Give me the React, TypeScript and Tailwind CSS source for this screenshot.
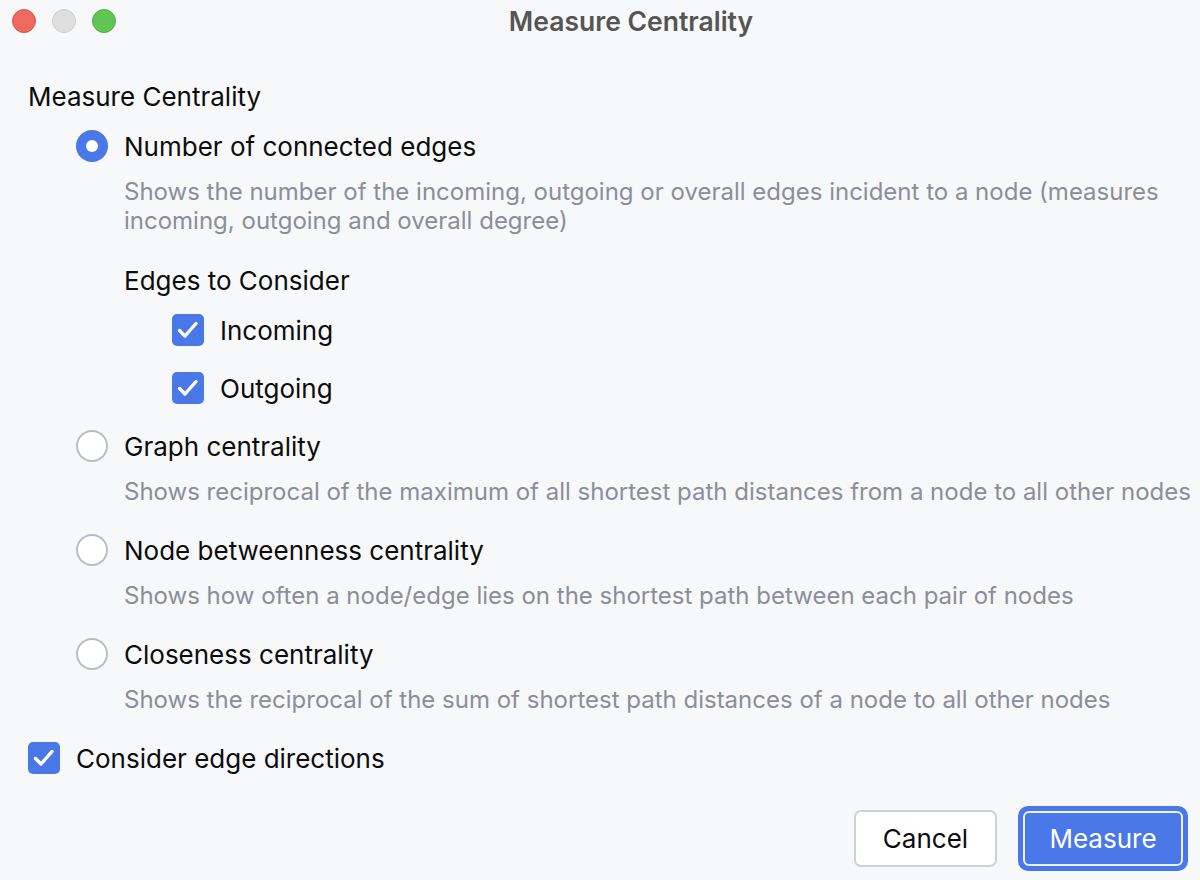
import React from 'react';

const font = { fontFamily: 'Inter, "Noto Sans", sans-serif' };

const Radio: React.FC<{ checked?: boolean }> = ({ checked }) =>
  checked ? (
    <div className="w-8 h-8 rounded-full bg-[#4a78e8] flex items-center justify-center shrink-0">
      <div className="w-3 h-3 rounded-full bg-white" />
    </div>
  ) : (
    <div className="w-8 h-8 rounded-full bg-white border-2 border-[#b9bcc6] shrink-0" />
  );

const Check: React.FC = () => (
  <div className="w-8 h-8 rounded-[5px] bg-[#4a78e8] flex items-center justify-center shrink-0">
    <svg width="32" height="32" viewBox="0 0 32 32" fill="none">
      <path d="M7.5 16.5 L13 22 L24 9.5" stroke="white" strokeWidth="3.4" strokeLinecap="round" strokeLinejoin="round" />
    </svg>
  </div>
);

const Option: React.FC<{ checked?: boolean; label: string; desc: string[]; mt: string }> = ({ checked, label, desc, mt }) => (
  <div className={mt}>
    <div className="flex items-center h-8 gap-4">
      <Radio checked={checked} />
      <span className="text-[26px] text-[#0c0c0c]">{label}</span>
    </div>
    <div className="pl-12 mt-[15px] text-[24px] leading-[29px] text-[#8b8e99] whitespace-nowrap">
      {desc.map((d) => (
        <div key={d}>{d}</div>
      ))}
    </div>
  </div>
);

export default function App() {
  return (
    <div className="w-[1200px] h-[880px] bg-[#f7f8fa] flex flex-col overflow-hidden" style={font}>
      <div className="h-[42px] shrink-0 relative flex items-center justify-center">
        <div className="absolute left-3 top-[9px] flex gap-4">
          <div className="w-6 h-6 rounded-full bg-[#ed6a5e] border border-[#d9574b]" />
          <div className="w-6 h-6 rounded-full bg-[#dfdfdf] border border-[#cdcdcd]" />
          <div className="w-6 h-6 rounded-full bg-[#61c554] border border-[#52ae45]" />
        </div>
        <span className="text-[26.5px] leading-[32px] font-semibold text-[#555555] pl-[62px]">Measure Centrality</span>
      </div>

      <div className="pl-7 pr-[12px] pt-[38px] flex flex-col">
        <div className="h-8 flex items-center text-[26px] text-[#0c0c0c]">Measure Centrality</div>

        <div className="pl-12">
          <Option
            mt="mt-[18px]"
            checked
            label="Number of connected edges"
            desc={[
              'Shows the number of the incoming, outgoing or overall edges incident to a node (measures',
              'incoming, outgoing and overall degree)',
            ]}
          />
          <div className="pl-12 mt-[29px]">
            <div className="h-8 flex items-center text-[26px] text-[#0c0c0c]">Edges to Consider</div>
            <div className="pl-12 mt-[18px] flex items-center h-8 gap-4">
              <Check />
              <span className="text-[26px] text-[#0c0c0c]">Incoming</span>
            </div>
            <div className="pl-12 mt-[26px] flex items-center h-8 gap-4">
              <Check />
              <span className="text-[26px] text-[#0c0c0c]">Outgoing</span>
            </div>
          </div>
          <Option
            mt="mt-[26px]"
            label="Graph centrality"
            desc={['Shows reciprocal of the maximum of all shortest path distances from a node to all other nodes']}
          />
          <Option
            mt="mt-[28px]"
            label="Node betweenness centrality"
            desc={['Shows how often a node/edge lies on the shortest path between each pair of nodes']}
          />
          <Option
            mt="mt-[28px]"
            label="Closeness centrality"
            desc={['Shows the reciprocal of the sum of shortest path distances of a node to all other nodes']}
          />
        </div>

        <div className="mt-[28px] flex items-center h-8 gap-4">
          <Check />
          <span className="text-[26px] text-[#0c0c0c]">Consider edge directions</span>
        </div>

        <div className="mt-[32px] flex justify-end items-center gap-[21px]">
          <button className="w-[143px] h-[57px] rounded-[7px] bg-white border-2 border-[#cdd0d6] text-[26px] text-[#0c0c0c]">
            Cancel
          </button>
          <button className="w-[170px] h-[65px] rounded-[10px] bg-[#4a78e8] border-[3px] border-[#4a78e8] text-[26px] text-white flex items-center justify-center p-[2px]">
            <span className="w-full h-full rounded-[6px] border-2 border-white/90 flex items-center justify-center">Measure</span>
          </button>
        </div>
      </div>
    </div>
  );
}
